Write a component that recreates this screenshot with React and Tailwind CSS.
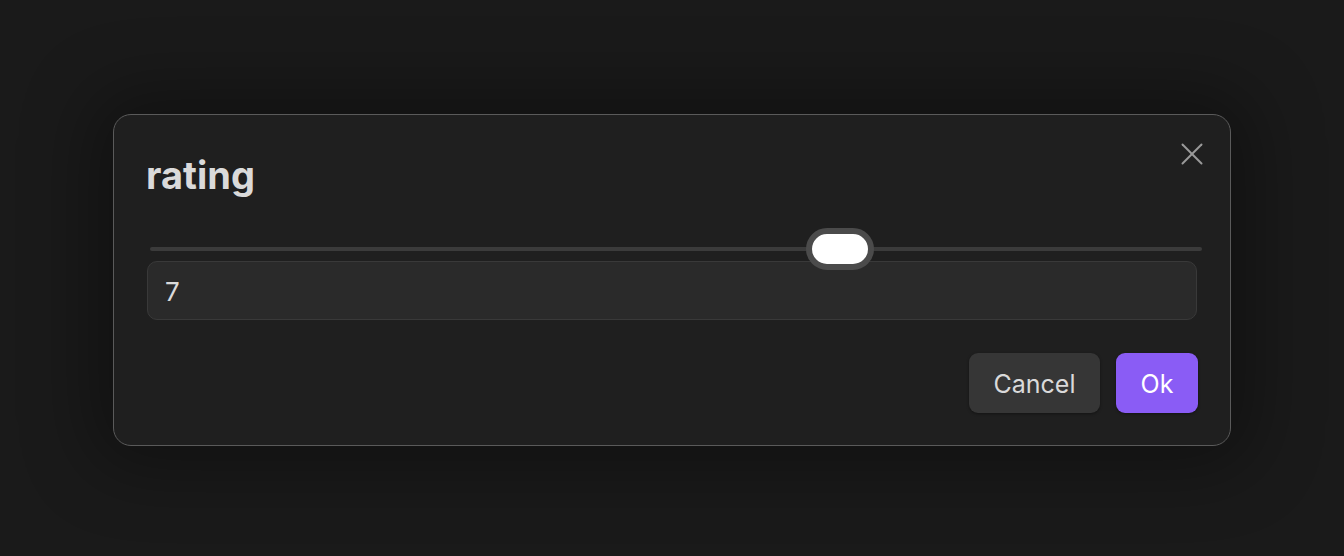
import React from "react";

export default function App() {
  const min = 1, max = 10, value = 7;
  const trackW = 1052, thumbW = 68;
  const left = ((value - min) / (max - min)) * (trackW - thumbW);
  return (
    <div
      className="w-[1344px] h-[556px] bg-[#1a1a1a] flex justify-center items-start pt-[114px] overflow-hidden"
      style={{ fontFamily: "Inter, 'Noto Sans', sans-serif" }}
    >
      <div className="relative w-[1118px] h-[332px] bg-[#1f1f1f] border-[1.5px] border-[#5a5a5a] rounded-[18px] shadow-[0_0_70px_20px_rgba(0,0,0,0.35)] pl-[33px] pr-[33px] pt-[39px] flex flex-col">
        <button className="absolute top-[28px] right-[27px] w-[22px] h-[22px] text-[#9a9a9a]">
          <svg width="22" height="22" viewBox="0 0 22 22" fill="none" stroke="currentColor" strokeWidth="2" strokeLinecap="round">
            <line x1="1.5" y1="1.5" x2="20.5" y2="20.5" />
            <line x1="20.5" y1="1.5" x2="1.5" y2="20.5" />
          </svg>
        </button>
        <div className="text-[38px] leading-[43px] font-bold text-[#dadada] ml-[-1px]">rating</div>
        <div className="relative mt-[40px] h-[24px] ml-[3px] mr-[-5px] flex items-center">
          <div className="w-full h-[4px] rounded-full bg-[#3b3b3b]" />
          <div
            className="absolute top-[-9px] w-[68px] h-[42px] rounded-full bg-white border-[6px] border-[#4b4b4b]"
            style={{ left: `${left}px` }}
          />
        </div>
        <div className="h-[59px] rounded-[10px] bg-[#2a2a2a] border border-[#393939] flex items-center pl-[17px] pt-[2px] text-[26px] text-[#dadada]">
          7
        </div>
        <div className="mt-[33px] flex justify-end gap-[16px] mr-[-1px]">
          <button className="h-[60px] w-[131px] rounded-[9px] bg-[#363636] text-[#dadada] text-[25px] pt-[3px] shadow-[0_1px_3px_rgba(0,0,0,0.4)]">
            Cancel
          </button>
          <button className="h-[60px] w-[82px] rounded-[9px] bg-[#8a5cf5] text-white text-[25px] pt-[3px] shadow-[0_1px_3px_rgba(0,0,0,0.4)]">
            Ok
          </button>
        </div>
      </div>
    </div>
  );
}
